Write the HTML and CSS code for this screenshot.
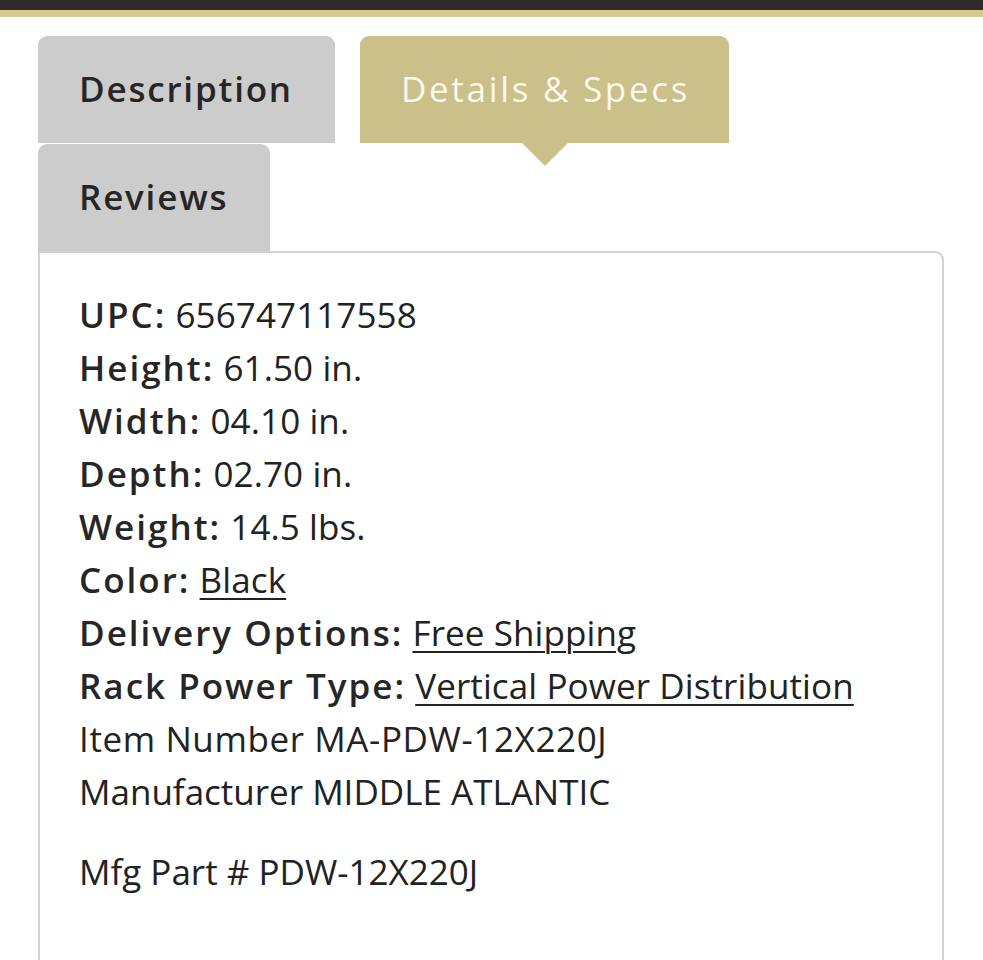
FILE: index.html
```html
<!DOCTYPE html>
<html>
<head>
<meta charset="utf-8">
<link rel="stylesheet" href="styles.css">
</head>
<body>
<div class="topbar"></div>
<div class="goldline"></div>
<div class="wrap">
  <div class="tabs">
    <div class="tab">Description</div>
    <div class="tab active">Details &amp; Specs</div>
    <div class="tab">Reviews</div>
  </div>
  <div class="panel">
    <ul class="specs">
      <li><span class="lbl">UPC:</span> 656747117558</li>
      <li><span class="lbl">Height:</span> 61.50 in.</li>
      <li><span class="lbl">Width:</span> 04.10 in.</li>
      <li><span class="lbl">Depth:</span> 02.70 in.</li>
      <li><span class="lbl">Weight:</span> 14.5 lbs.</li>
      <li><span class="lbl">Color:</span> <a href="#">Black</a></li>
      <li><span class="lbl">Delivery Options:</span> <a href="#">Free Shipping</a></li>
      <li><span class="lbl">Rack Power Type:</span> <a href="#">Vertical Power Distribution</a></li>
    </ul>
    <div class="plain item">Item Number MA-PDW-12X220J</div>
    <div class="plain">Manufacturer MIDDLE ATLANTIC</div>
    <div class="plain part">Mfg Part # PDW-12X220J</div>
  </div>
</div>
</body>
</html>
```

FILE: styles.css
```css
* { box-sizing: border-box; }
body {
  margin: 0;
  background: #ffffff;
  font-family: "Open Sans", "Liberation Sans", sans-serif;
  color: #222222;
}
.topbar { height: 10px; background: #2b2b2b; }
.goldline { height: 7px; background: #d9ca90; }
.wrap { margin: 19px 39px 0 38px; }
.tabs {
  display: flex;
  flex-wrap: wrap;
  column-gap: 25px;
  row-gap: 1px;
}
.tab {
  position: relative;
  height: 107px;
  padding: 0 42px 2px 41px;
  display: flex;
  align-items: center;
  background: #cccccc;
  border-radius: 9px 9px 0 0;
  font-size: 35px;
  font-weight: 600;
  letter-spacing: 1.8px;
  color: #262626;
}
.tab.active {
  background: #cbbf8a;
  color: #fbf8ee;
  font-weight: 400;
  letter-spacing: 2.7px;
  padding-right: 39px;
}
.tab.active::after {
  content: "";
  position: absolute;
  left: 50%;
  bottom: -23px;
  margin-left: -23px;
  border-left: 23px solid transparent;
  border-right: 23px solid transparent;
  border-top: 23px solid #cbbf8a;
}
.panel {
  border: 2px solid #d2d2d2;
  border-radius: 0 9px 0 0;
  padding: 35px 39px 60px 39px;
  min-height: 720px;
}
.specs { list-style: none; margin: 0; padding: 0; }
.specs li, .plain {
  font-size: 35px;
  line-height: 53px;
  letter-spacing: 0.1px;
  white-space: nowrap;
}
.lbl { font-weight: 600; letter-spacing: 2px; color: #262626; }
.specs a { color: #222222; text-decoration: underline; text-underline-offset: 5px; text-decoration-thickness: 2px; }
.plain { letter-spacing: 0; }
.plain.item { letter-spacing: 0.6px; }
.part { margin-top: 27px; }
```
